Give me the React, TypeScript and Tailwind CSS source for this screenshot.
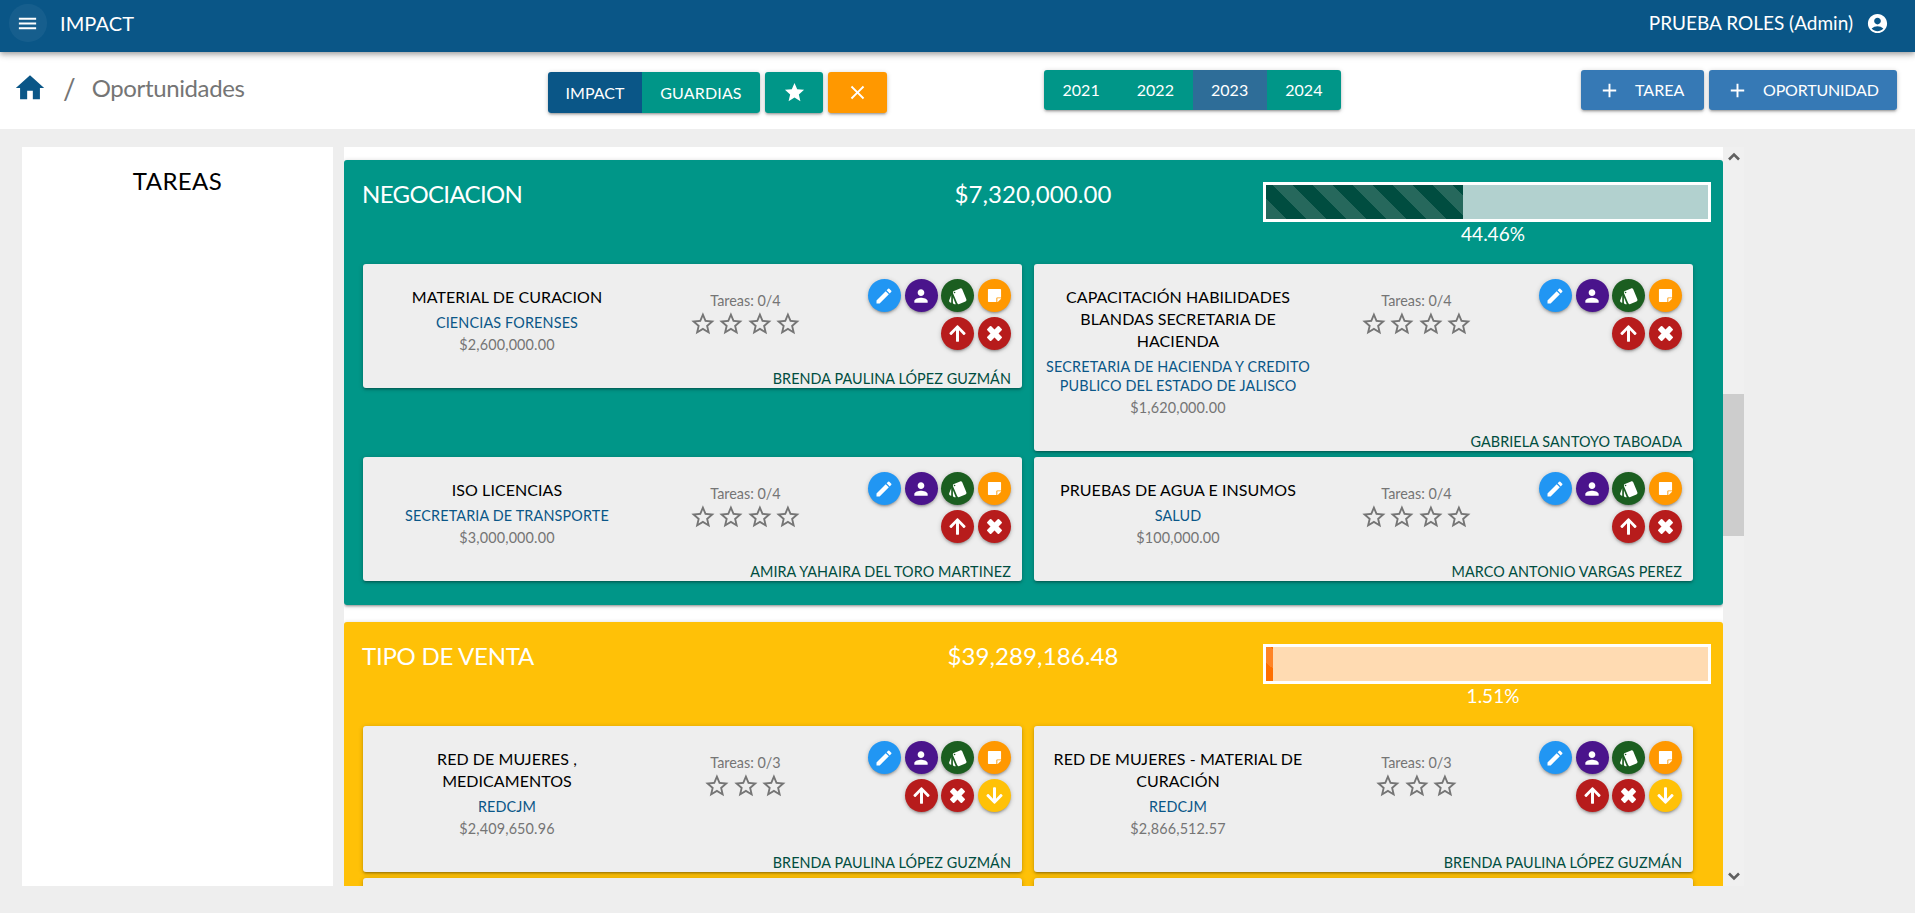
import type { ReactNode } from 'react';
import { MdMenu, MdHome, MdAccountCircle, MdStar, MdClose, MdAdd, MdStarBorder, MdEdit, MdPerson, MdStyle } from 'react-icons/md';
import { FaArrowUp, FaArrowDown, FaStickyNote } from 'react-icons/fa';

type Deal = { title: string[]; client: string[]; amount: string; tasks: number; owner: string };

const SHADOW = 'shadow-[0_1px_5px_rgba(0,0,0,0.2),0_2px_2px_rgba(0,0,0,0.14),0_3px_1px_-2px_rgba(0,0,0,0.12)]';

const negotiation: Deal[] = [
  { title: ['MATERIAL DE CURACION'], client: ['CIENCIAS FORENSES'], amount: '$2,600,000.00', tasks: 4, owner: 'BRENDA PAULINA LÓPEZ GUZMÁN' },
  {
    title: ['CAPACITACIÓN HABILIDADES', 'BLANDAS SECRETARIA DE', 'HACIENDA'],
    client: ['SECRETARIA DE HACIENDA Y CREDITO', 'PUBLICO DEL ESTADO DE JALISCO'],
    amount: '$1,620,000.00', tasks: 4, owner: 'GABRIELA SANTOYO TABOADA',
  },
  { title: ['ISO LICENCIAS'], client: ['SECRETARIA DE TRANSPORTE'], amount: '$3,000,000.00', tasks: 4, owner: 'AMIRA YAHAIRA DEL TORO MARTINEZ' },
  { title: ['PRUEBAS DE AGUA E INSUMOS'], client: ['SALUD'], amount: '$100,000.00', tasks: 4, owner: 'MARCO ANTONIO VARGAS PEREZ' },
];

const sales: Deal[] = [
  { title: ['RED DE MUJERES ,', 'MEDICAMENTOS'], client: ['REDCJM'], amount: '$2,409,650.96', tasks: 3, owner: 'BRENDA PAULINA LÓPEZ GUZMÁN' },
  { title: ['RED DE MUJERES - MATERIAL DE', 'CURACIÓN'], client: ['REDCJM'], amount: '$2,866,512.57', tasks: 3, owner: 'BRENDA PAULINA LÓPEZ GUZMÁN' },
];

function Round({ color, children }: { color: string; children: ReactNode }) {
  return (
    <button className={`flex size-[33px] items-center justify-center rounded-full text-white ${SHADOW} ${color}`}>{children}</button>
  );
}

function Cross() {
  return (
    <svg width="17" height="17" viewBox="0 0 17 17" fill="none" stroke="currentColor" strokeLinejoin="round">
      <path strokeWidth="4" d="M3.4 3.4 13.6 13.6M13.6 3.4 3.4 13.6" />
      <path strokeWidth="2" fill="currentColor" d="M2 4.6 4.6 2 8.5 5.9 12.4 2 15 4.6 11.1 8.5 15 12.4 12.4 15 8.5 11.1 4.6 15 2 12.4 5.9 8.5Z" />
    </svg>
  );
}

function DealCard({ deal, back }: { deal: Deal; back?: boolean }) {
  return (
    <article className={`flex w-[659px] flex-col rounded-[3px] bg-[#eeeeee] ${SHADOW}`}>
      <div className="flex">
        <div className="w-[288px] pt-[22px] text-center">
          <h3 className="text-[16px] leading-[22px] tracking-[0.06px] text-black">
            {deal.title.map((line) => <span key={line} className="block">{line}</span>)}
          </h3>
          <p className="mt-[5px] text-[14.4px] leading-[19px] tracking-[0.15px] text-[#0a5788]">
            {deal.client.map((line) => <span key={line} className="block">{line}</span>)}
          </p>
          <p className="mt-[3px] text-[14.4px] leading-[19px] tracking-[0.15px] text-[#757575]">{deal.amount}</p>
        </div>
        <div className="flex w-[189px] flex-col items-center pt-[27px] text-[#757575]">
          <p className="text-[14.4px] leading-[19px]">Tareas: 0/{deal.tasks}</p>
          <div className="flex gap-[0.6px]">
            {Array.from({ length: deal.tasks }, (_, i) => <MdStarBorder key={i} className="size-[27.8px]" />)}
          </div>
        </div>
        <div className="flex flex-1 flex-col items-end gap-[5px] pt-[15px] pr-[11px]">
          <div className="flex gap-[3.7px]">
            <Round color="bg-[#2196f3]"><MdEdit className="size-5" /></Round>
            <Round color="bg-[#4a148c]"><MdPerson className="size-5" /></Round>
            <Round color="bg-[#1b5e20]"><MdStyle className="size-5" /></Round>
            <Round color="bg-[#ff9800]"><FaStickyNote className="size-[15px]" /></Round>
          </div>
          <div className="flex gap-[3.7px]">
            <Round color="bg-[#b71c1c]"><FaArrowUp className="size-[19px]" /></Round>
            <Round color="bg-[#b71c1c]"><Cross /></Round>
            {back && <Round color="bg-[#ffc107]"><FaArrowDown className="size-[19px]" /></Round>}
          </div>
        </div>
      </div>
      <p className="mt-[15px] pr-[11px] text-right text-[14.4px] leading-[19px] tracking-[0.08px] text-[#004d40]">{deal.owner}</p>
    </article>
  );
}

function Stage({ name, nameClass, total, percent, color, track, fill, deals, back, children }: {
  name: string; nameClass: string; total: string; percent: number; color: string; track: string; fill: string; deals: Deal[]; back?: boolean; children?: ReactNode;
}) {
  return (
    <section className={`shrink-0 rounded-[3px] pb-6 pl-[19px] ${SHADOW} ${color}`}>
      <header className="-ml-px flex h-[104px] text-white">
        <h2 className={`w-[441px] pt-[18px] text-[24px] leading-[32px] ${nameClass}`}>{name}</h2>
        <p className="w-[460px] pt-[18px] text-center text-[24px] leading-[32px] tracking-[0.1px]">{total}</p>
        <div className="w-[448px] pt-[22px]">
          <div className={`h-10 border-[3px] border-white ${track}`}>
            <div
              className={`h-full bg-[linear-gradient(45deg,rgba(255,255,255,0.15)_25%,transparent_25%,transparent_50%,rgba(255,255,255,0.15)_50%,rgba(255,255,255,0.15)_75%,transparent_75%)] [background-size:40px_40px] ${fill}`}
              style={{ width: `${percent}%` }}
            />
          </div>
          <p className="pl-3 text-center text-[19px] leading-[23px]">{percent}%</p>
        </div>
      </header>
      <div className="grid grid-cols-[659px_659px] items-start gap-x-3 gap-y-[6px]">
        {deals.map((deal) => <DealCard key={deal.title[0]} deal={deal} back={back} />)}
        {children}
      </div>
    </section>
  );
}

export default function App() {
  return (
    <div className="flex h-[913px] flex-col overflow-hidden bg-[#eeeeee] font-[Lato,sans-serif]">
      <header className="z-10 flex h-[52px] shrink-0 items-start bg-[#0a5687] text-white shadow-[0_2px_4px_-1px_rgba(0,0,0,0.2),0_4px_5px_rgba(0,0,0,0.14),0_1px_10px_rgba(0,0,0,0.12)]">
        <button className="mt-1 ml-[9px] flex size-[38px] items-center justify-center rounded-full bg-white/5 pr-px"><MdMenu className="size-[23px]" /></button>
        <h1 className="mt-[9px] ml-[13px] text-[20px] leading-7 tracking-[0.1px]">IMPACT</h1>
        <span className="mt-[9px] ml-auto text-[19px] leading-7">PRUEBA ROLES (Admin)</span>
        <MdAccountCircle className="mt-[11.5px] mr-[26px] ml-[13px] size-[23px]" />
      </header>

      <div className="flex h-[77px] shrink-0 items-start bg-white">
        <div className="flex w-[548px] items-center pt-[18px] pl-[13px]">
          <MdHome className="mt-px size-[34px] text-[#0a5687]" />
          <span className="ml-[16px] text-[28px] leading-[34px] text-[#757575]">/</span>
          <span className="ml-[16px] text-[24px] leading-[34px] tracking-[-0.38px] text-[#757575]">Oportunidades</span>
        </div>
        <div className="flex w-[496px] gap-[5px] pt-5 text-[16px] text-white">
          <div className={`flex h-[41px] overflow-hidden rounded-[3px] ${SHADOW}`}>
            <button className="w-[94px] bg-[#0a5687]">IMPACT</button>
            <button className="w-[118px] bg-[#009688] tracking-[0.15px]">GUARDIAS</button>
          </div>
          <button className={`flex h-[41px] w-[58px] items-center justify-center rounded-[3px] bg-[#009688] ${SHADOW}`}><MdStar className="size-[23px]" /></button>
          <button className={`flex h-[41px] w-[59px] items-center justify-center rounded-[3px] bg-[#ff9800] ${SHADOW}`}><MdClose className="size-[23px]" /></button>
        </div>
        <div className="pt-[18px] text-[16px] text-white">
          <div className={`flex h-10 w-[297px] overflow-hidden rounded-[3px] bg-[#009688] pb-px ${SHADOW}`}>
            <button className="flex-1">2021</button>
            <button className="flex-1">2022</button>
            <button className="-mb-px flex-1 bg-[#2e6d98] pb-px">2023</button>
            <button className="flex-1">2024</button>
          </div>
        </div>
        <div className="mr-[18px] ml-auto flex gap-[5px] pt-[18px] text-[16px] text-white">
          <button className={`flex h-10 w-[123px] items-center rounded-[3px] bg-[#3679b5] pl-[17px] ${SHADOW}`}><MdAdd className="mr-[14px] size-[23px]" />TAREA</button>
          <button className={`flex h-10 w-[188px] items-center rounded-[3px] bg-[#3679b5] pl-[17px] tracking-[-0.18px] ${SHADOW}`}><MdAdd className="mr-[14px] size-[23px]" />OPORTUNIDAD</button>
        </div>
      </div>

      <main className="flex h-[757px] shrink-0 pt-[18px] pl-[22px]">
        <aside className="w-[311px] bg-white pt-[18px] text-center text-[24px] leading-[32px] tracking-[0.4px] text-black">TAREAS</aside>
        <div className="ml-[11px] flex w-[1379px] flex-col gap-[17px] overflow-hidden bg-white pt-[13px]">
          <Stage name="NEGOCIACION" nameClass="tracking-[-0.65px]" total="$7,320,000.00" percent={44.46} color="bg-[#009688]" track="bg-[#b2d1cf]" fill="bg-[#004d40] [background-position:7px_0]" deals={negotiation} />
          <Stage name="TIPO DE VENTA" nameClass="tracking-[-0.25px]" total="$39,289,186.48" percent={1.51} color="bg-[#ffc107]" track="bg-[#ffdbb2]" fill="bg-[#ff6f00] [background-position:-15px_0]" deals={sales} back>
            <div className={`h-[124px] rounded-[3px] bg-[#eeeeee] ${SHADOW}`} />
            <div className={`h-[124px] rounded-[3px] bg-[#eeeeee] ${SHADOW}`} />
          </Stage>
        </div>
        <div className="flex w-[21px] flex-col items-center bg-[#f0f0f0] text-[#606060]">
          <svg className="mt-[5px] shrink-0" width="12" height="9" viewBox="0 0 12 9" fill="none" stroke="currentColor" strokeWidth="2.6"><path d="M1 7.5 6 2.5 11 7.5" /></svg>
          <div className="mt-[233px] h-[142px] w-full bg-[#cdcdcd]" />
          <svg className="mt-auto mb-[5px] shrink-0" width="12" height="9" viewBox="0 0 12 9" fill="none" stroke="currentColor" strokeWidth="2.6"><path d="M1 1.5 6 6.5 11 1.5" /></svg>
        </div>
      </main>
    </div>
  );
}
